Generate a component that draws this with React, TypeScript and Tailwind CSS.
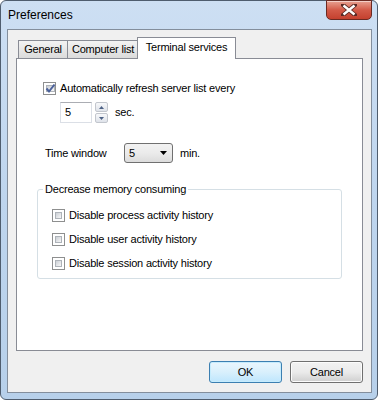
import React from 'react';

const Check = ({ checked = false }: { checked?: boolean }) => (
  <span className="w-[13px] h-[13px] shrink-0 border border-[#8e8f8f] bg-white p-[2px] flex">
    <span className="flex-1 border border-[#aeb3b9] bg-gradient-to-br from-[#cbcfd5] to-[#f7f7f7] flex items-center justify-center">
      {checked && (
        <svg width="11" height="11" viewBox="0 0 11 11" className="-m-[2px]">
          <path d="M1.5 5.5 L4 8.5 L9.5 1.5" fill="none" stroke="#4b619b" strokeWidth="2" />
        </svg>
      )}
    </span>
  </span>
);

const Tab = ({ label, width, first = false }: { label: string; width: string; first?: boolean }) => (
  <div
    className={`${width} h-[18px] flex items-center justify-center border border-b-0 border-[#898c95] bg-gradient-to-b from-[#f3f3f3] to-[#dbdbdb] ${
      first ? '' : '-ml-px'
    }`}
  >
    {label}
  </div>
);

const SpinArrow = ({ up }: { up?: boolean }) => (
  <span className="flex-1 border border-[#c2c6cd] rounded-[2px] bg-gradient-to-b from-[#f7f8fa] to-[#dfe3ea] flex items-center justify-center">
    <svg width="5" height="3" viewBox="0 0 5 3">
      <path d={up ? 'M0 3 L2.5 0 L5 3 Z' : 'M0 0 L2.5 3 L5 0 Z'} fill="#4d6185" />
    </svg>
  </span>
);

const Row = ({ label }: { label: string }) => (
  <div className="h-[13px] flex items-center gap-[4px] pl-[14px]">
    <Check />
    <span className="leading-[13px]">{label}</span>
  </div>
);

export default function App() {
  return (
    <div
      className="w-[378px] h-[400px] flex flex-col border border-[#4f5d6e] rounded-[6px] bg-gradient-to-b from-[#cddff3] via-[#bed5ee] to-[#b7d0ea] text-[11px] tracking-[-0.2px] text-black"
      style={{ fontFamily: '"Liberation Sans", Arial, sans-serif' }}
    >
      {/* title bar */}
      <div className="h-[28px] shrink-0 flex items-start justify-between">
        <div className="pl-[7px] pt-[7px] text-[12px] tracking-normal leading-[15px]">Preferences</div>
        <div className="mr-[5px] -mt-px w-[46px] h-[20px] rounded-b-[5px] border border-[#6b2a22] bg-gradient-to-b from-[#e7a192] via-[#d35a48] to-[#c4402e] flex items-center justify-center shadow-[inset_0_1px_0_rgba(255,255,255,0.5)]">
          <svg width="16" height="12" viewBox="0 0 16 12">
            <path d="M2 1 L14 11 M14 1 L2 11" stroke="#5a2a25" strokeWidth="4.2" strokeLinecap="square" />
            <path d="M2.5 1.5 L13.5 10.5 M13.5 1.5 L2.5 10.5" stroke="#ffffff" strokeWidth="2.4" />
          </svg>
        </div>
      </div>

      {/* client area */}
      <div className="flex-1 ml-[6px] mr-[5px] mb-[6px] border border-[#838e9c] bg-[#f0f0f0] flex flex-col px-[8px] pt-[7px]">
        {/* tabs */}
        <div className="flex items-end h-[21px] pl-[2px]">
          <Tab label="General" width="w-[50px]" first />
          <Tab label="Computer list" width="w-[72px]" />
          <div className="relative z-10 -ml-[2px] -mb-px w-[99px] h-[22px] pb-[3px] flex items-center justify-center border border-b-0 border-[#898c95] bg-white">
            Terminal services
          </div>
        </div>

        {/* panel */}
        <div className="h-[293px] border border-[#898c95] bg-white flex flex-col">
          <div className="mt-[23px] h-[13px] pl-[26px] flex items-center gap-[4px]">
            <Check checked />
            <span className="leading-[13px]">Automatically refresh server list every</span>
          </div>

          <div className="mt-[7px] pl-[43px] h-[21px] flex items-center">
            <div className="w-[32px] h-[21px] border border-[#dbdfe6] border-t-[#abadb3] bg-white pl-[4px] flex items-center">
              5
            </div>
            <div className="ml-[3px] w-[13px] h-[21px] flex flex-col gap-px">
              <SpinArrow up />
              <SpinArrow />
            </div>
            <span className="ml-[7px]">sec.</span>
          </div>

          <div className="mt-[20px] pl-[28px] h-[20px] flex items-center">
            <span className="w-[79px]">Time window</span>
            <div className="w-[49px] h-[20px] rounded-[3px] border border-[#707070] bg-gradient-to-b from-[#f2f2f2] via-[#ebebeb] to-[#dcdcdc] flex items-center pl-[4px] pr-[5px] justify-between">
              <span>5</span>
              <svg width="7" height="4" viewBox="0 0 7 4">
                <path d="M0 0 L7 0 L3.5 4 Z" fill="#000" />
              </svg>
            </div>
            <span className="ml-[7px]">min.</span>
          </div>

          <fieldset className="mt-[20px] ml-[20px] w-[305px] h-[96px] border border-[#d5dfe5] rounded-[3px] flex flex-col gap-[11px] pb-[8px]">
            <legend className="ml-[5px] px-[2px] leading-[13px]">Decrease memory consuming</legend>
            <div className="mt-[2px]" />
            <Row label="Disable process activity history" />
            <Row label="Disable user activity history" />
            <Row label="Disable session activity history" />
          </fieldset>
        </div>

        {/* buttons */}
        <div className="mt-[10px] flex justify-end gap-[8px]">
          <button className="w-[73px] h-[22px] rounded-[3px] border border-[#3c7fb1] bg-gradient-to-b from-[#eaf6fd] via-[#d9f0fc] to-[#bee6fd] shadow-[inset_0_0_0_1px_#c6ecfd]">
            OK
          </button>
          <button className="w-[73px] h-[22px] rounded-[3px] border border-[#707070] bg-gradient-to-b from-[#f2f2f2] via-[#ebebeb] to-[#cfcfcf] shadow-[inset_0_0_0_1px_#fcfcfc]">
            Cancel
          </button>
        </div>
      </div>
    </div>
  );
}
